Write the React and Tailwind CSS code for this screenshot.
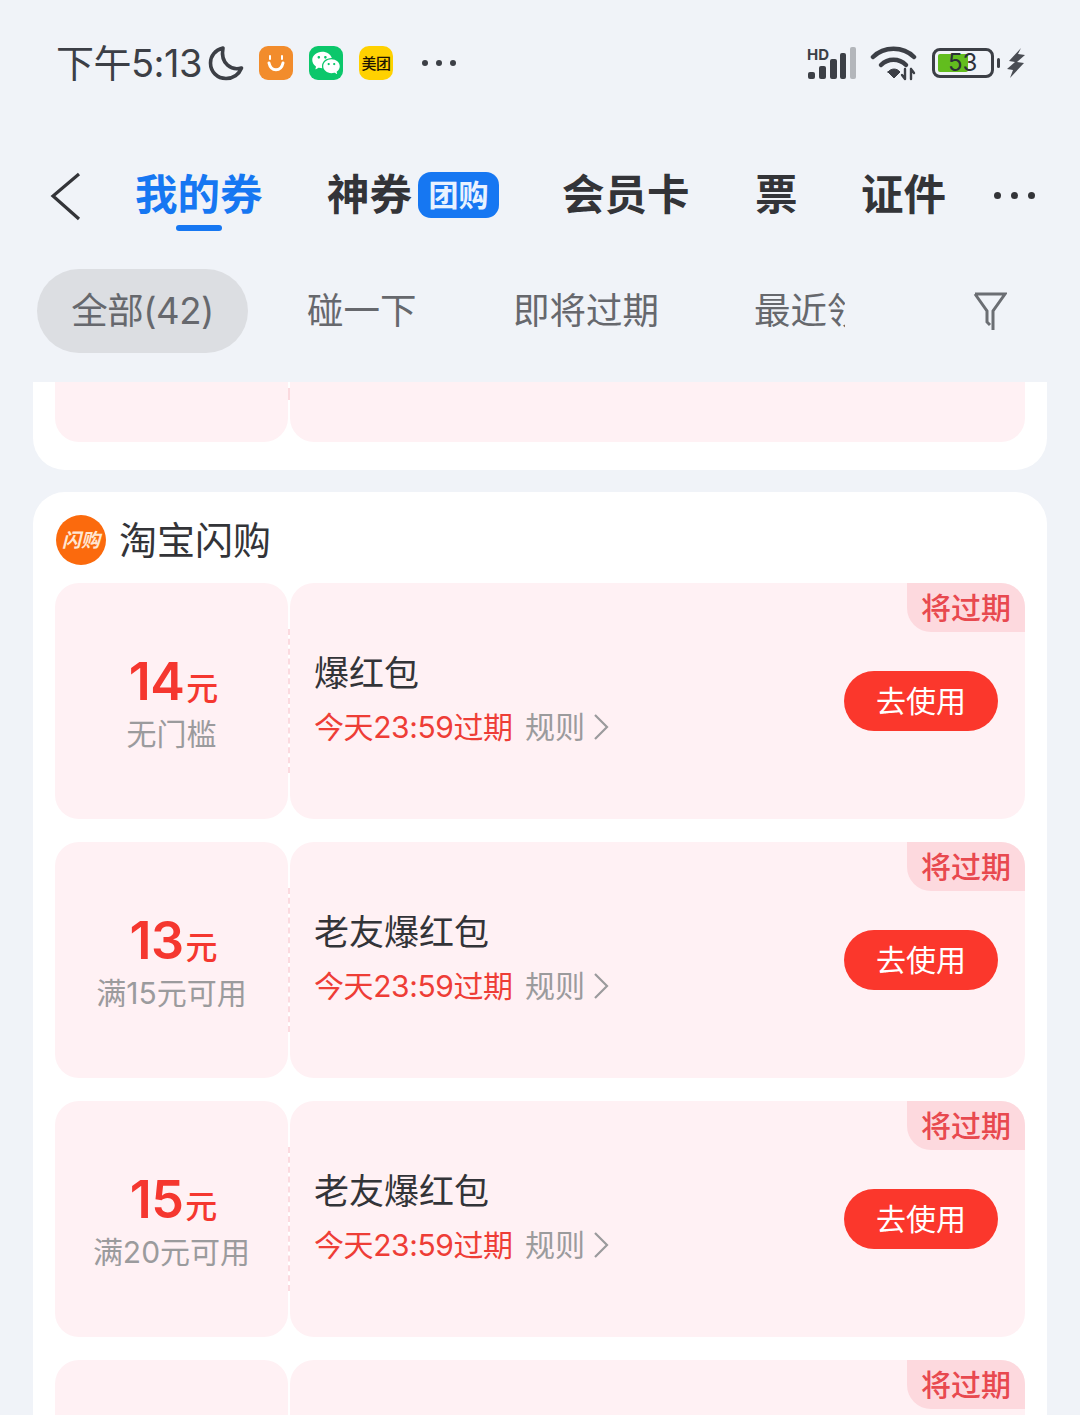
import React from 'react';
import { RiWechatFill } from 'react-icons/ri';

const font = "font-['Inter','Noto_Sans_CJK_SC',sans-serif]";

const tabs = [
  { label: '我的券', className: 'w-[127px] text-[#1677f2]', active: true },
  { label: '神券', className: 'w-[84px] ml-[65px] text-[#333438]', badge: true },
  { label: '会员卡', className: 'w-[127px] ml-[151px] text-[#333438]' },
  { label: '票', className: 'w-[42px] ml-[66px] text-[#333438]' },
  { label: '证件', className: 'w-[84px] ml-[64px] text-[#333438]' },
];

const coupons = [
  { amount: '14', limit: '无门槛', title: '爆红包' },
  { amount: '13', limit: '满15元可用', title: '老友爆红包' },
  { amount: '15', limit: '满20元可用', title: '老友爆红包' },
];

const Dots = ({ color = 'bg-[#3c3f46]', size = 'w-[6px] h-[6px]', gap = 'gap-[8px]' }) => (
  <div className={`flex items-center ${gap}`}>
    <span className={`${size} rounded-full ${color}`} />
    <span className={`${size} rounded-full ${color}`} />
    <span className={`${size} rounded-full ${color}`} />
  </div>
);

const StatusBar = () => (
  <div className="h-[125px] pt-[40px] pl-[56px] pr-[54px] flex items-start justify-between">
    <div className="flex items-center h-[46px]">
      <span className="text-[38px] leading-[46px] text-[#3c3f46] tracking-[-0.5px] w-[150px] whitespace-nowrap">下午5:13</span>
      <svg width="36" height="36" viewBox="0 0 36 36" className="ml-[2px]" fill="none" stroke="#3c3f46" strokeWidth="3.6" strokeLinejoin="round">
        <path d="M15 3 C7 5 2.5 11 2.5 18 C2.5 27 9.5 33.5 18 33.5 C25 33.5 31 29.5 33.5 23 C24 26 12 19 15 3 Z" />
      </svg>
      <div className="ml-[15px] w-[34px] h-[34px] rounded-[9px] bg-[#f28c2c] flex items-center justify-center">
        <svg width="24" height="24" viewBox="0 0 24 24" fill="none" stroke="#fff" strokeLinecap="round">
          <path d="M5 12 C7 21 17 21 19 12" strokeWidth="3" />
          <path d="M6 5 V8 M18 5 V8" strokeWidth="2" />
        </svg>
      </div>
      <div className="ml-[16px] w-[34px] h-[34px] rounded-[9px] bg-[#0bc76b] flex items-center justify-center">
        <RiWechatFill size={30} color="#fff" />
      </div>
      <div className="ml-[16px] w-[34px] h-[34px] rounded-[10px] bg-[#ffd100] flex items-center justify-center">
        <span className="text-[15px] leading-none text-[#1e1400] font-medium tracking-[-0.5px] whitespace-nowrap">美团</span>
      </div>
      <div className="ml-[29px]">
        <Dots size="w-[6px] h-[6px]" gap="gap-[8px]" />
      </div>
    </div>
    <div className="flex items-center h-[46px]">
      <svg width="52" height="34" viewBox="0 0 52 34" className="mr-[12px]">
        <text x="1" y="14" fontSize="15" fontWeight="700" fill="#3c3f46" fontFamily="Inter, sans-serif">HD</text>
        <rect x="2" y="26" width="7" height="7" rx="2" fill="#3c3f46" />
        <rect x="13" y="20" width="7" height="13" rx="2" fill="#3c3f46" />
        <rect x="24" y="13" width="7" height="20" rx="2" fill="#3c3f46" />
        <rect x="34" y="7" width="6" height="26" rx="2" fill="#3c3f46" />
        <rect x="44" y="1" width="6" height="32" rx="2" fill="#b3b6bb" />
      </svg>
      <svg width="48" height="36" viewBox="0 0 48 36" className="mr-[14px]" fill="none" stroke="#3c3f46" strokeLinecap="round">
        <path d="M3 12 C14 1 33 1 44 12" strokeWidth="4.5" />
        <path d="M11 20 C18 13 29 13 36 20" strokeWidth="4.5" />
        <path d="M18 27 L24 33 L30 27 C27 23 21 23 18 27 Z" fill="#3c3f46" strokeWidth="1" />
        <path d="M35 24 V34 M35 34 L32 30 M41 34 V24 M41 24 L44 28" strokeWidth="2.4" />
      </svg>
      <div className="relative w-[62px] h-[30px] rounded-[8px] border-[3px] border-[#3c3f46] p-[3px]">
        <div className="w-[30px] h-full bg-[#62bd1e] rounded-[2px]" />
        <span className="absolute left-[13px] top-[-3px] text-[24px] leading-[30px] text-[#2b3038]">53</span>
      </div>
      <div className="ml-[3px] w-[3px] h-[10px] rounded-full bg-[#3c3f46]" />
      <svg width="20" height="30" viewBox="0 0 20 30" className="ml-[6px]" fill="#4a4d54">
        <path d="M15 0 L3 13 L9 14 L1 21 L7 22 L4 30 L18 15 L11 14 L19 7 L12 6 Z" />
      </svg>
    </div>
  </div>
);

const TabBar = () => (
  <div className="h-[107px] pt-[26px] pl-[50px] flex items-start">
    <svg width="34" height="50" viewBox="0 0 34 50" fill="none" stroke="#333438" strokeWidth="3.2" className="mt-[2px]">
      <path d="M29 2 L3 24 L29 47" />
    </svg>
    <div className="ml-[51px] flex items-start">
      {tabs.map((tab) => (
        <div key={tab.label} className={`relative shrink-0 h-[50px] ${tab.className}`}>
          <div className="text-[42.5px] leading-[50px] font-bold whitespace-nowrap">{tab.label}</div>
          {tab.active && <div className="absolute left-[41px] top-[55px] w-[46px] h-[6px] rounded-full bg-[#1677f2]" />}
          {tab.badge && (
            <div className="absolute left-[91px] top-[2px] w-[81px] h-[46px] rounded-[13px] bg-[#1677f2] text-[30px] leading-[46px] text-center text-[#e8f2ff] font-semibold whitespace-nowrap">
              团购
            </div>
          )}
        </div>
      ))}
    </div>
    <div className="ml-[49px] mt-[22px]">
      <Dots size="w-[7px] h-[7px]" gap="gap-[10px]" color="bg-[#333438]" />
    </div>
  </div>
);

const FilterBar = () => (
  <div className="h-[113px] pl-[37px] flex items-start text-[#66686d] text-[36.5px] leading-[84px]">
    <div className="w-[211px] h-[84px] rounded-full bg-[#dcdee2] text-center whitespace-nowrap tracking-[-0.5px]">全部(42)</div>
    <div className="ml-[59px] w-[110px] whitespace-nowrap">碰一下</div>
    <div className="ml-[96px] w-[146px] whitespace-nowrap">即将过期</div>
    <div className="ml-[95px] w-[91px] overflow-hidden whitespace-nowrap">最近领取</div>
    <svg width="34" height="40" viewBox="0 0 34 40" fill="none" stroke="#6b6e73" strokeWidth="3" className="ml-[128px] mt-[23px]">
      <path d="M2 2 H32 L20 19 V38 M17 33 L14 30 V19 L2 2" />
    </svg>
  </div>
);

const ExpireTag = () => (
  <div className="absolute right-0 top-0 w-[118px] h-[49px] pt-[1px] bg-[#fdd9de] rounded-tr-[24px] rounded-bl-[24px] text-[#e8494f] text-[30px] leading-[49px] font-medium text-center whitespace-nowrap">
    将过期
  </div>
);

const Coupon = ({ amount, limit, title }) => (
  <div className="flex h-[236px] mb-[23px] last:mb-0">
    <div className="w-[233px] rounded-[24px] bg-[#fff1f4] pt-[67px] text-center">
      <div className="flex items-baseline justify-center h-[64px] pl-[4px] text-[#f5372f]">
        <span className="text-[52px] leading-[64px] font-semibold tracking-[-0.5px]">{amount}</span>
        <span className="text-[32px] leading-[64px] font-medium ml-[2px]">元</span>
      </div>
      <div className="text-[30px] leading-[40px] text-[#9b9b9d] whitespace-nowrap">{limit}</div>
    </div>
    <div className="w-[2px] bg-white py-[46px]">
      <div className="h-full border-l-2 border-dashed border-[#fbdadf]" />
    </div>
    <div className="relative flex-1 rounded-[24px] bg-[#fff1f4] pl-[24px] pr-[27px] pt-[67px] flex items-start justify-between">
      <div>
        <div className="text-[35px] leading-[46px] text-[#333438] whitespace-nowrap">{title}</div>
        <div className="flex items-center h-[40px] mt-[11px] text-[30px] leading-[40px] whitespace-nowrap">
          <span className="text-[#ee3d36] w-[198px] tracking-[-0.4px]">今天23:59过期</span>
          <span className="text-[#9b9b9d] ml-[13px]">规则</span>
          <svg width="16" height="28" viewBox="0 0 16 28" fill="none" stroke="#9b9b9d" strokeWidth="2.2" className="ml-[8px]">
            <path d="M2 2 L14 14 L2 26" />
          </svg>
        </div>
      </div>
      <button className="w-[154px] h-[60px] mt-[21px] rounded-full bg-[#fb372c] text-white text-[30px] leading-[60px]">去使用</button>
      <ExpireTag />
    </div>
  </div>
);

const App = () => (
  <div className={`w-[1080px] h-[1415px] overflow-hidden bg-[#f0f3f8] ${font}`}>
    <StatusBar />
    <div className="h-[19px]" />
    <TabBar />
    <div className="h-[18px]" />
    <FilterBar />
    <div className="mx-[33px]">
      {/* tail of the card scrolled above the fold */}
      <div className="h-[88px] bg-white rounded-b-[32px] px-[22px]">
        <div className="flex h-[60px]">
          <div className="w-[233px] rounded-b-[24px] bg-[#fff1f4]" />
          <div className="w-[2px] pb-[42px] pt-[6px]">
            <div className="h-full border-l-2 border-dashed border-[#fbdadf]" />
          </div>
          <div className="flex-1 rounded-b-[24px] bg-[#fff1f4]" />
        </div>
      </div>
      <div className="mt-[22px] bg-white rounded-[32px] px-[22px]">
        <div className="h-[91px] flex items-start pt-[23px]">
          <div className="w-[50px] h-[50px] ml-[1px] rounded-full bg-[#fb6a0d] flex items-center justify-center">
            <span className="text-[19px] leading-none italic font-bold text-[#ffe6d2] whitespace-nowrap">闪购</span>
          </div>
          <span className="ml-[13px] text-[38px] leading-[50px] text-[#333438] whitespace-nowrap">淘宝闪购</span>
        </div>
        {coupons.map((c) => (
          <Coupon key={c.amount} {...c} />
        ))}
        <div className="flex h-[236px] mt-[23px]">
          <div className="w-[233px] rounded-[24px] bg-[#fff1f4]" />
          <div className="w-[2px]" />
          <div className="relative flex-1 rounded-[24px] bg-[#fff1f4]">
            <ExpireTag />
          </div>
        </div>
      </div>
    </div>
  </div>
);

export default App;
